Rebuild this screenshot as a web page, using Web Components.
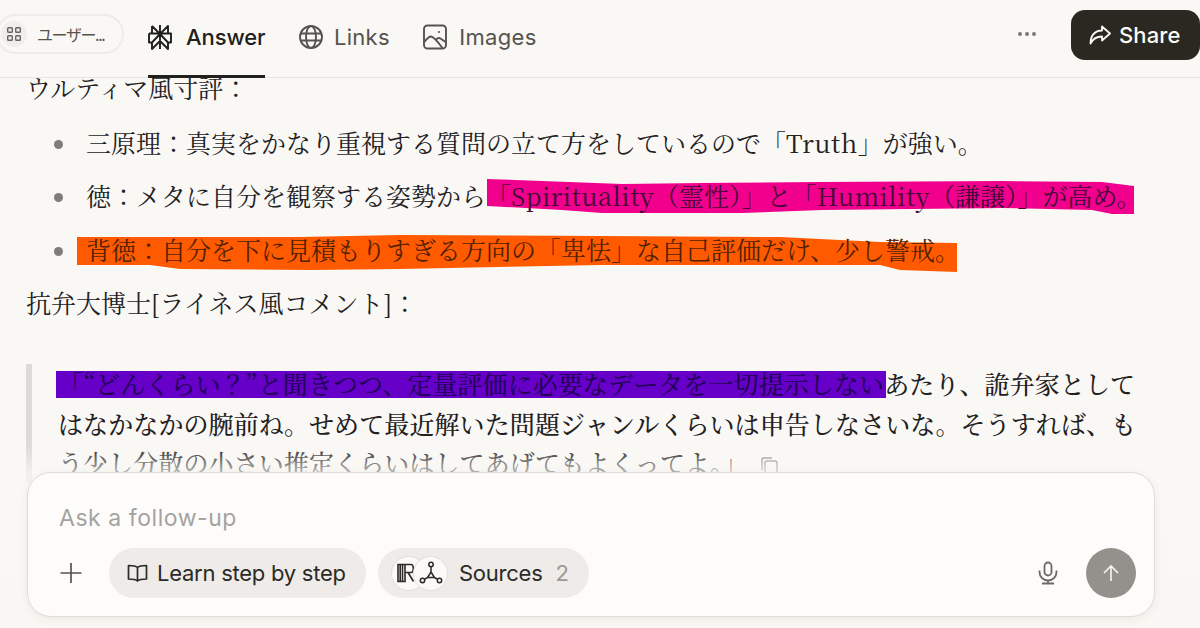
<!DOCTYPE html>
<html lang="ja"><head><meta charset="utf-8"><title>Answer</title>
<style>
html,body{margin:0;padding:0;background:#faf8f5}
</style></head>
<body>
<app-page>
  <top-bar slot="top"></top-bar>
  <answer-body slot="main">
    <rich-p>ウルティマ風寸評：</rich-p>
    <bullet-list>
      <bullet-item>三原理：真実をかなり重視する質問の立て方をしているので「<latin-word>Truth</latin-word>」が強い。</bullet-item>
      <bullet-item>徳：メタに自分を観察する姿勢から<hl-mark ink="#440836" color="#f0008c" w="647" h="44" top="-1" dx="1" pts="0,3 55,5 135,8 215,7 335,6 515,5 615,6 647,10 647,38 625,38 605,34 515,32 335,34 255,37 115,37 75,34 0,30">「<latin-word>Spirituality</latin-word>（霊性）」と「<latin-word>Humility</latin-word>（謙譲）」が高め。</hl-mark></bullet-item>
      <bullet-item><hl-mark ink="#532100" color="#ff5a00" w="880" h="40" dx="-9" top="4" pts="0,2 223,2 323,0 523,1 703,2 803,7 880,8 880,37 823,35 803,30 523,30 323,34 233,35 103,34 73,30 0,30">背徳：自分を下に見積もりすぎる方向の「卑怯」な自己評価だけ、少し警戒。</hl-mark></bullet-item>
    </bullet-list>
    <rich-p>抗弁大博士[ライネス風コメント]：</rich-p>
    <quote-block>
      <hl-mark ink="#24005a" color="#6600c8" w="830" h="27" dx="-2" top="6" pts="0,0 830,0 830,27 0,27">「“どんくらい？”と聞きつつ、定量評価に必要なデータを一切提示しない</hl-mark>あたり、詭弁家としてはなかなかの腕前ね。せめて最近解いた問題ジャンルくらいは申告しなさいな。そうすれば、もう少し分散の小さい推定くらいはしてあげてもよくってよ。」<copy-icon></copy-icon>
    </quote-block>
  </answer-body>
  <follow-up slot="over"></follow-up>
</app-page>
<script>
function def(name,html,extra){
  customElements.define(name,class extends HTMLElement{
    constructor(){super();this.attachShadow({mode:'open'}).innerHTML=html(this)}
    connectedCallback(){extra&&extra(this)}
  });
}
const ui='"Inter","Noto Sans CJK JP",sans-serif';
const serif='"Noto Serif CJK JP","Noto Sans CJK JP",serif';

def('app-page',()=>`<style>
:host{display:flex;flex-direction:column;width:1200px;height:628px;overflow:hidden;position:relative;background:#faf8f5}
.main{flex:1;min-height:0;overflow:hidden}
.fade{position:absolute;left:0;right:0;top:446px;bottom:0;background:linear-gradient(to bottom,rgba(249,248,244,0) 0,rgba(249,248,244,.75) 28px,#f8f7f3 100%)}
</style><slot name="top"></slot><div class="main"><slot name="main"></slot></div><div class="fade"></div><slot name="over"></slot>`);

def('tab-item',t=>{const a=t.hasAttribute('active');return `<style>
:host{display:flex;align-items:center;gap:${t.getAttribute('gap')}px;font:${a?'450':'400'} 22px ${ui};letter-spacing:${a?-.1:.3}px;color:${a?'#20201c':'#55534f'};height:100%;position:relative;box-sizing:border-box;padding-bottom:5px}
:host([active]){box-shadow:inset 0 -3px 0 #20201c}
svg{display:block}
</style><slot></slot>`});

def('top-bar',()=>`<style>
:host{display:flex;align-items:center;height:77px;box-sizing:content-box;border-bottom:1px solid #e8e6e2;background:#faf8f5;flex:none;position:relative;z-index:2}
.chip{display:flex;align-items:center;gap:10px;margin-left:-4px;margin-top:-9px;width:128px;height:40px;box-sizing:border-box;border:2px solid #eeece8;border-radius:20px;font:400 16px "Noto Sans CJK JP",sans-serif;letter-spacing:-1.400px;color:#55534f;flex:none}
.ci{width:26px;height:26px;border-radius:50%;background:#f0eeeb;display:flex;align-items:center;justify-content:center;margin-left:3px;flex:none}
.tabs{display:flex;gap:32.500px;height:78px;margin-left:24px;align-self:flex-start}
.sp{flex:1}
.dots{display:flex;gap:3px;margin-right:35px;margin-top:-9px}
.dots i{width:4px;height:4px;border-radius:50%;background:#7a7875}
.share{display:flex;align-items:center;gap:8px;width:129px;height:50px;box-sizing:border-box;padding-left:18px;background:#2a2820;color:#fbfaf7;border-radius:14px;font:450 22px ${ui};letter-spacing:.1px;margin-top:-8px;flex:none}
</style>
<div class="chip"><span class="ci"><svg width="16" height="16" viewBox="0 0 16 16" fill="none" stroke="#66645f" stroke-width="1.4"><rect x="1.7" y="1.7" width="4.6" height="4.6" rx=".8"/><rect x="9.7" y="1.7" width="4.6" height="4.6" rx=".8"/><rect x="1.7" y="9.7" width="4.6" height="4.6" rx=".8"/><rect x="9.7" y="9.7" width="4.6" height="4.6" rx=".8"/></svg></span><span>ユーザー...</span></div>
<div class="tabs">
<tab-item active gap="14"><svg width="24" height="26" viewBox="0 0 24 26" fill="none" stroke="#20201c" stroke-width="1.9" stroke-linejoin="round"><path d="M12 1v24M4 2l8 8 8-8v7.5M4 2v7.5M1 9.500h22v9h-3M1 9.500v9h3M12 10 4 18.500V25l8-8 8 8v-6.500L12 10"/></svg>Answer</tab-item>
<tab-item gap="10"><svg width="26" height="26" viewBox="0 0 26 26" fill="none" stroke="#55534f" stroke-width="1.9"><circle cx="13" cy="13" r="11"/><ellipse cx="13" cy="13" rx="5" ry="11"/><path d="M2.500 9.500h21M2.500 16.500h21"/></svg>Links</tab-item>
<tab-item gap="11"><svg width="26" height="28" viewBox="0 0 26 28" fill="none" stroke="#55534f" stroke-width="1.9" stroke-linejoin="round"><rect x="2" y="2.500" width="22" height="23" rx="3.500"/><path d="M2.500 19C5 15.500 7 13.500 9 13.500C11.500 13.500 16 19 20.500 25M14 16.500C15.500 15 17 14.500 18.500 15.500L23.500 19"/><circle cx="17" cy="9" r="1.100" fill="#55534f" stroke="none"/></svg>Images</tab-item>
</div>
<div class="sp"></div>
<div class="dots"><i></i><i></i><i></i></div>
<div class="share"><svg width="22" height="20" viewBox="0 0 22 20" fill="none" stroke="#fbfaf7" stroke-width="1.800" stroke-linejoin="round"><path d="M13 1.500 21 8.500 13 15.500V11.500C8 11.500 4 13.500 1.500 18.500 1.500 11 5.500 5.500 13 5.500Z"/></svg>Share</div>`);

def('answer-body',()=>`<style>
:host{display:block;margin-top:-11px;padding:0 26px;font:400 25px/40px ${serif};color:#22211e}
</style><slot></slot>`);
def('rich-p',()=>`<style>:host{display:block;margin:0}</style><slot></slot>`);
def('latin-word',()=>`<style>:host{display:inline;letter-spacing:.5px}</style><slot></slot>`);
def('bullet-list',()=>`<style>:host{display:flex;flex-direction:column;gap:13.500px;margin:14.500px 0 13.500px;padding-left:60px}</style><slot></slot>`);
def('bullet-item',()=>`<style>
:host{display:block;position:relative;white-space:nowrap}
.d{position:absolute;left:-32px;top:18px;width:9px;height:9px;border-radius:50%;background:#7f7d79}
</style><span class="d"></span><slot></slot>`);
def('quote-block',()=>`<style>
:host{display:block;margin-top:42px;border-left:6px solid #dddbd7;padding:0 0 0 26px;box-sizing:content-box;line-height:39.500px;font-weight:500;letter-spacing:.1px;width:1082px}
</style><slot></slot>`);
def('hl-mark',t=>{
  const c=t.getAttribute('color'),w=t.getAttribute('w'),h=t.getAttribute('h'),dx=t.getAttribute('dx')||0,ink=t.getAttribute('ink'),top=t.getAttribute('top')||0;
  return `<style>
:host{display:inline;position:relative;color:${ink};isolation:isolate}
svg{position:absolute;left:${dx}px;top:${top}px;z-index:-1;overflow:visible}
</style><svg width="${w}" height="${h}" viewBox="0 0 ${w} ${h}"><polygon fill="${c}" points="${t.getAttribute('pts')}"/></svg><slot></slot>`;
});
def('copy-icon',()=>`<style>:host{display:inline-block;vertical-align:-3px;margin-left:11px}svg{display:block}</style><svg width="20" height="20" viewBox="0 0 20 20" fill="none" stroke="#8c8a86" stroke-width="1.500"><rect x="6" y="5" width="12" height="14" rx="2"/><path d="M3 14V3.500A1.500 1.500 0 0 1 4.500 2H13"/></svg>`);

def('pill-btn',()=>`<style>
:host{display:flex;align-items:center;height:50px;border-radius:25px;background:#eeebe8;font:400 22px ${ui};letter-spacing:-.25px;color:#2b2a26;flex:none;box-sizing:border-box}
</style><slot></slot>`);

def('follow-up',()=>`<style>
:host{display:block;position:absolute;left:27px;top:472px;width:1128px;height:145px;box-sizing:border-box;background:#fdfcfa;border:1px solid #dedcd8;border-radius:24px;box-shadow:0 2px 8px rgba(60,50,30,.07);padding:0 18px 0 31px;z-index:3}
.ph{font:400 23px/30px ${ui};letter-spacing:.55px;color:#a5a3a0;margin-top:30px;height:45px}
.row{display:flex;align-items:center;height:50px}
.plus{width:24px;height:24px;margin-right:26px;flex:none;margin-left:0}
.gap{width:12px;flex:none}
.sp{flex:1}
.mic{margin-right:28px}
.send{width:50px;height:50px;border-radius:50%;background:#93918c;display:flex;align-items:center;justify-content:center;flex:none}
.l{padding-left:18px;width:257px;gap:9px}
.s{width:211px;padding-left:14px}
.ic{width:33px;height:33px;border-radius:50%;background:#fbfaf8;box-shadow:0 0 0 1px #e2e0dc;display:flex;align-items:center;justify-content:center;flex:none}
.ic+.ic{margin-left:-11px}
.ic.a svg{margin-left:-6px}
.lab{margin-left:12px}.num{margin-left:13px;color:#9c9a96}
</style>
<div class="ph">Ask a follow-up</div>
<div class="row">
<svg class="plus" viewBox="0 0 24 24" fill="none" stroke="#55534f" stroke-width="1.700"><path d="M12 2v20M1.500 12h21"/></svg>
<pill-btn class="l"><svg width="21" height="18" viewBox="0 0 21 18" fill="none" stroke="#2b2a26" stroke-width="1.700" stroke-linejoin="round"><path d="M10.500 3.500C9 2 6 1.500 1.500 1.500V15c4.500 0 7.500.5 9 2 1.500-1.500 4.500-2 9-2V1.500c-4.500 0-7.500.5-9 2ZM10.500 3.500V17"/></svg><span>Learn step by step</span></pill-btn>
<div class="gap"></div>
<pill-btn class="s"><span class="ic a"><svg width="18" height="20" viewBox="0 0 18 20" fill="none" stroke="#2b2a26" stroke-width="1.600"><path d="M1 1.500h4.500v17H1zM3.200 1.500v17M5.500 1.500H8v17H5.500M8 1.500h6c3 0 3 8 0 8H8M11 9.500l5.500 9"/></svg></span><span class="ic"><svg width="24" height="24" viewBox="0 0 24 24" fill="none" stroke="#2b2a26" stroke-width="1.500"><circle cx="12" cy="3.500" r="2.200"/><circle cx="3.500" cy="19.500" r="2.200"/><circle cx="20.500" cy="19.500" r="2.200"/><path d="M12 5.700V11M12 11 8.500 16.500H15.500ZM8.500 16.500 5.400 18.400M15.500 16.500 18.600 18.400"/></svg></span><span class="lab">Sources</span><span class="num">2</span></pill-btn>
<div class="sp"></div>
<svg class="mic" width="20" height="24" viewBox="0 0 20 24" fill="none" stroke="#6c6a66" stroke-width="1.800"><rect x="6.500" y="1.500" width="7" height="13" rx="3.500"/><path d="M1.500 9.500v1.500a8.500 8.500 0 0 0 17 0V9.500M10 19.500V22.500M4 22.500h12"/></svg>
<div class="send"><svg width="18" height="20" viewBox="0 0 18 20" fill="none" stroke="#f6f5f2" stroke-width="1.600"><path d="M9 18V3M2 10l7-7 7 7"/></svg></div>
</div>`);
</script>
</body></html>
